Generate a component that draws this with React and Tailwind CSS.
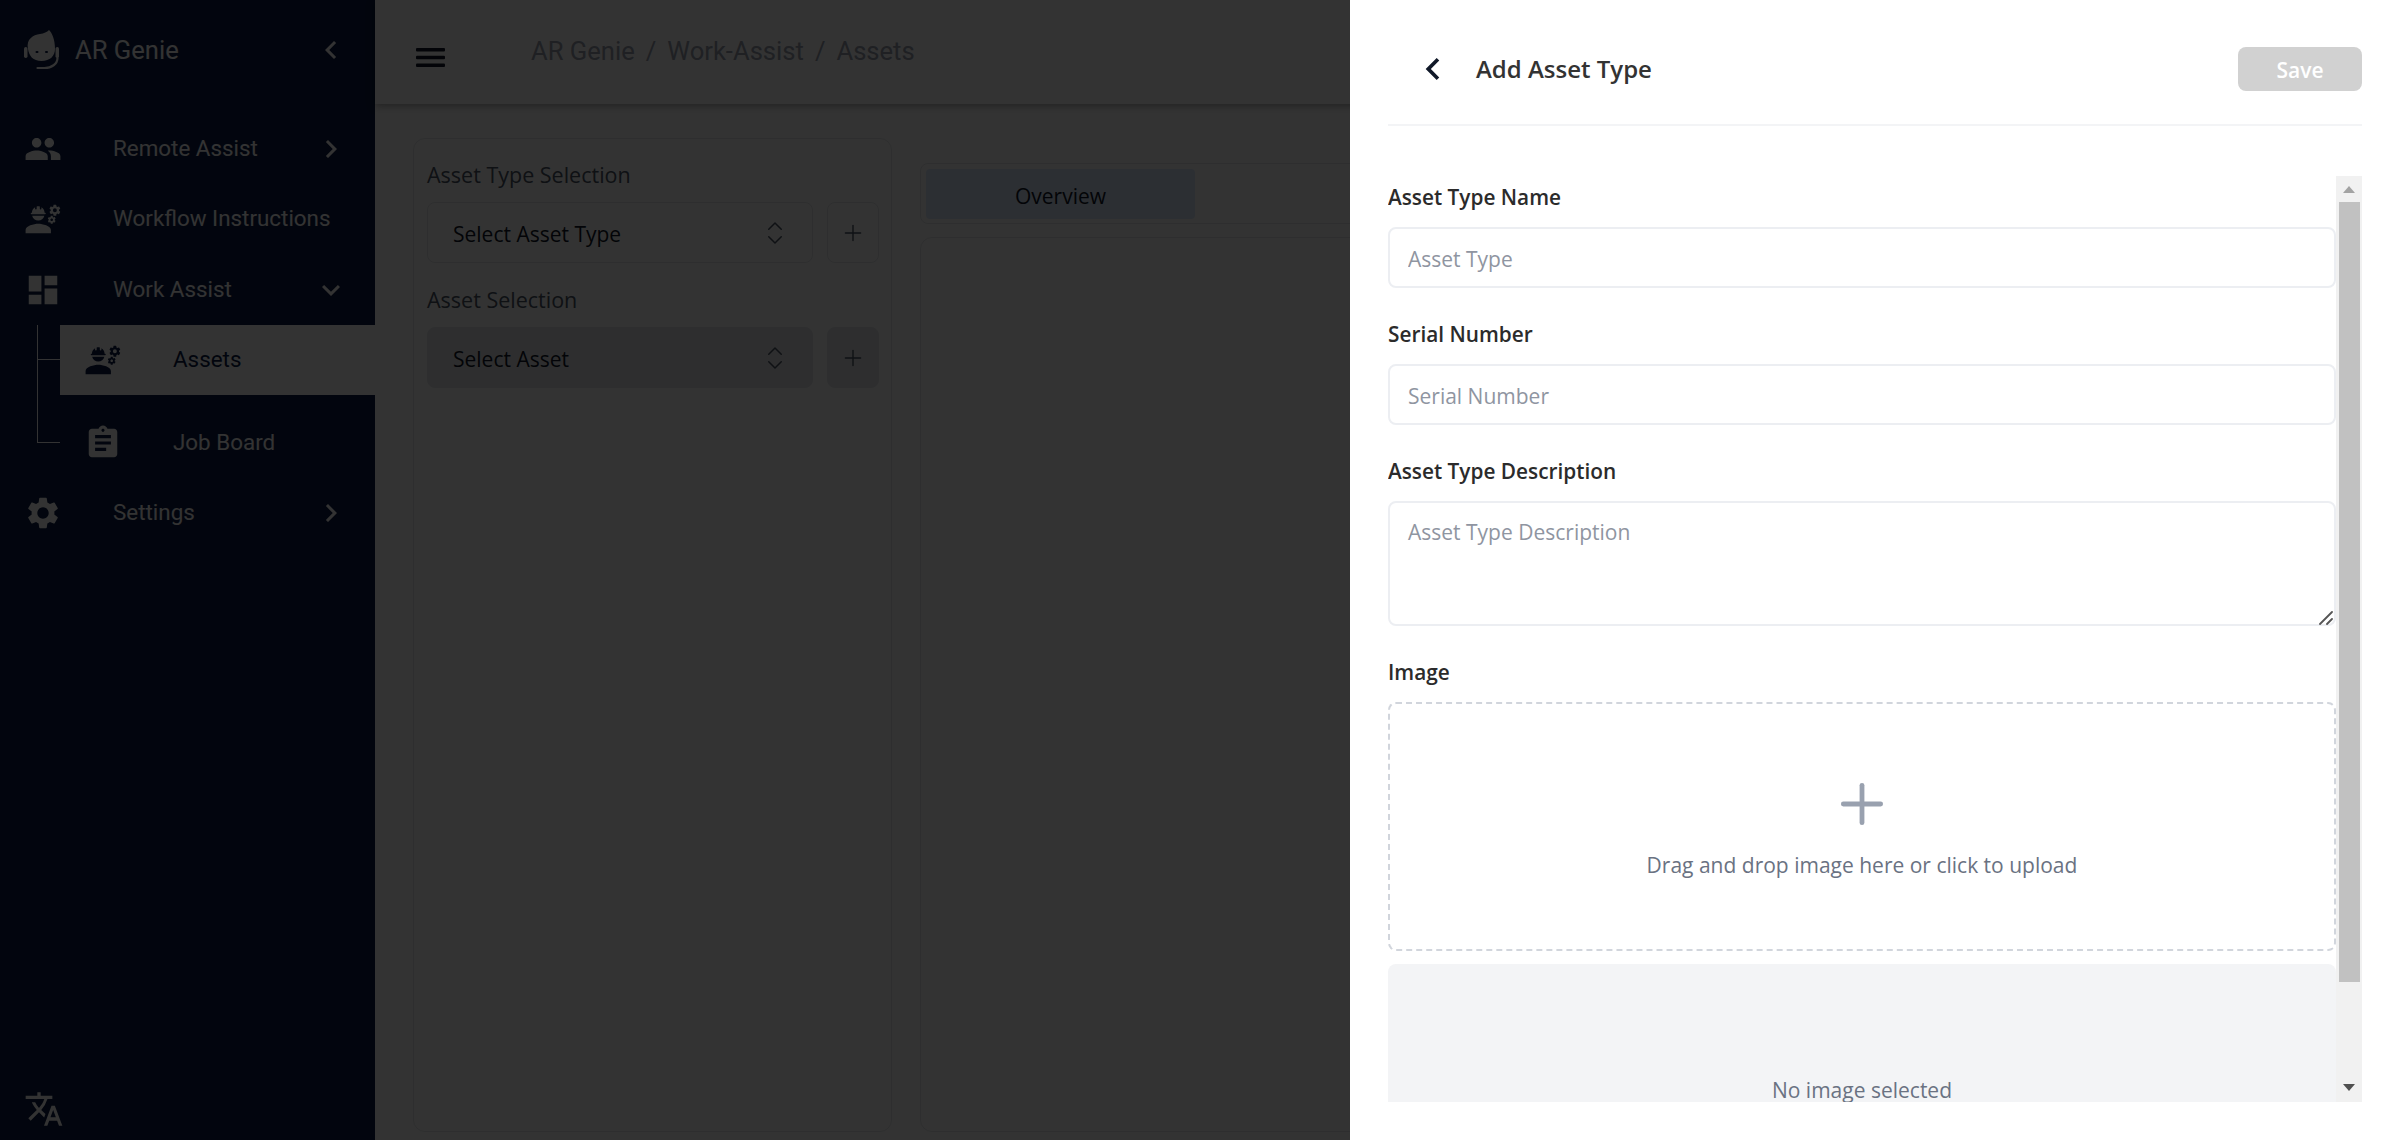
import React from 'react';
import { ChevronsUpDown, Plus } from "lucide-react";
import {
  MdChevronLeft,
  MdChevronRight,
  MdKeyboardArrowDown,
  MdPeople,
  MdEngineering,
  MdDashboard,
  MdAssignment,
  MdSettings,
  MdTranslate,
} from "react-icons/md";

const Logo = () => (
  <svg width="40" height="42" viewBox="0 0 40 42" className="shrink-0">
    <path fill="#fff" d="M5 20C3 10 10 6 17 5c4-.5 7-2 9-4 3 3 6 9 6 19 0 7-5 12-13.500 12S6 27 5 20z" />
    <rect x="1" y="18" width="3.500" height="11" rx="1.700" fill="#fff" />
    <rect x="32.500" y="18" width="3.500" height="11" rx="1.700" fill="#fff" />
    <rect x="12.500" y="22" width="3" height="2" rx="1" fill="#0b1d45" />
    <rect x="22" y="22" width="3" height="2" rx="1" fill="#0b1d45" />
    <path fill="none" stroke="#fff" strokeWidth="2.200" strokeLinecap="round" d="M34.500 29c0 6-6 10-13 10h-7" />
  </svg>
);

const NavRow = ({ icon: Icon, label, chevron: Chevron, className = "" }) => (
  <div className={`flex h-[70px] items-center pl-[24px] pr-[26px] text-white ${className}`}>
    <Icon size={38} className="shrink-0" />
    <span className="ml-[51px] flex-1 text-[22.400px] whitespace-nowrap">{label}</span>
    {Chevron && <Chevron size={36} className="shrink-0" />}
  </div>
);

const Sidebar = () => (
  <aside className="flex h-full w-[375px] shrink-0 flex-col bg-[#0b1d45] font-['Roboto',sans-serif]">
    <div className="flex h-[100px] items-center pl-[23px] pr-[26px] text-white">
      <Logo />
      <span className="ml-[12px] flex-1 text-[25.600px]">AR Genie</span>
      <MdChevronLeft size={36} />
    </div>
    <div className="mt-[14px] flex flex-col">
      <NavRow icon={MdPeople} label="Remote Assist" chevron={MdChevronRight} />
      <NavRow icon={MdEngineering} label="Workflow Instructions" />
      <NavRow icon={MdDashboard} label="Work Assist" chevron={MdKeyboardArrowDown} className="mt-px" />
    </div>
    <div className="relative">
      <div className="absolute left-[37px] top-0 h-[118px] w-[23px] border-b border-l border-white" />
      <div className="absolute left-[38px] top-[34px] h-px w-[22px] bg-white" />
      <div className="relative ml-[60px] flex h-[70px] items-center bg-white pl-[24px] text-[#0b1d45]">
        <MdEngineering size={38} className="shrink-0" />
        <span className="ml-[51px] text-[22.400px]">Assets</span>
      </div>
      <div className="relative ml-[60px] mt-[13px] flex h-[70px] items-center pl-[24px] text-white">
        <MdAssignment size={38} className="shrink-0" />
        <span className="ml-[51px] text-[22.400px]">Job Board</span>
      </div>
    </div>
    <NavRow icon={MdSettings} label="Settings" chevron={MdChevronRight} />
    <div className="mt-auto pb-[11px] pl-[24px] text-white">
      <MdTranslate size={40} />
    </div>
  </aside>
);

const SelectBox = ({ label, disabled }) => (
  <div className="flex gap-[14px]">
    <div className={`flex h-[61px] w-[386px] items-center justify-between rounded-lg border border-gray-200 pl-[25px] pr-[22px] text-gray-900 ${disabled ? "bg-gray-200" : "bg-white"}`}>
      <span className="pt-[4px] text-[21px] font-medium">{label}</span>
      <ChevronsUpDown size={30} strokeWidth={1.200} className="text-gray-600" />
    </div>
    <div className={`flex h-[61px] w-[52px] items-center justify-center rounded-lg border border-gray-200 text-gray-600 ${disabled ? "bg-gray-200" : "bg-white"}`}>
      <Plus size={26} strokeWidth={1.300} />
    </div>
  </div>
);

const MainArea = () => (
  <div className="flex h-full min-w-0 flex-1 flex-col bg-white">
    <header className="flex h-[104px] shrink-0 items-center bg-white pb-[2px] pl-[41px] shadow-[0_2px_8px_rgba(0,0,0,0.35)]">
      <svg width="29" height="19" viewBox="0 0 29 19" className="mt-[12px] shrink-0 text-gray-900" fill="currentColor">
        <rect width="29" height="3.600" rx="1" />
        <rect y="7.700" width="29" height="3.600" rx="1" />
        <rect y="15.400" width="29" height="3.600" rx="1" />
      </svg>
      <div className="ml-[86px] flex gap-[11px] font-['Roboto',sans-serif] text-[25.600px] text-gray-400">
        <span>AR Genie</span>
        <span>/</span>
        <span>Work-Assist</span>
        <span>/</span>
        <span>Assets</span>
      </div>
    </header>
    <div className="flex min-h-0 flex-1 gap-[28px] pb-[8px] pl-[38px] pt-[34px] font-['Open_Sans',sans-serif]">
      <div className="w-[479px] shrink-0 rounded-xl border border-gray-200 pl-[13px] pt-[21px]">
        <div className="mb-[12px] text-[21.500px] leading-[30px] text-gray-600">Asset Type Selection</div>
        <SelectBox label="Select Asset Type" />
        <div className="mb-[12px] mt-[22px] text-[21.500px] leading-[30px] text-gray-600">Asset Selection</div>
        <SelectBox label="Select Asset" disabled />
      </div>
      <div className="mt-[25px] flex w-[1450px] shrink-0 flex-col gap-[13px]">
        <div className="h-[61px] rounded-lg border border-gray-200 p-[5px]">
          <div className="flex h-[50px] w-[269px] items-center justify-center rounded bg-blue-100 pt-[5px] text-[21px] font-medium text-gray-900">Overview</div>
        </div>
        <div className="flex-1 rounded-xl border border-gray-200" />
      </div>
    </div>
  </div>
);

const FieldLabel = ({ children, className = "" }) => (
  <label className={`block h-[30px] text-[20.800px] font-semibold leading-[30px] text-[#2b2b2b] ${className}`}>{children}</label>
);

const inputClass = "mb-[31px] block h-[61px] w-full rounded-lg border-2 border-[#eceef2] px-[18px] pt-[2px] text-[21px] placeholder:text-[#8f95a1]";

const ScrollBar = () => (
  <div className="flex w-[26px] shrink-0 flex-col items-center bg-[#f1f1f1]">
    <div className="flex h-[26px] items-center justify-center">
      <div className="h-0 w-0 border-x-[6px] border-b-[7px] border-x-transparent border-b-[#a3a3a3]" />
    </div>
    <div className="h-[780px] w-[21px] bg-[#c1c1c1]" />
    <div className="mt-auto flex h-[26px] items-start justify-center pt-[8px]">
      <div className="h-0 w-0 border-x-[6px] border-t-[7px] border-x-transparent border-t-[#505050]" />
    </div>
  </div>
);

const Drawer = () => (
  <div className="fixed inset-y-0 right-0 flex w-[1050px] flex-col bg-white px-[38px] font-['Open_Sans',sans-serif]">
    <div className="flex h-[126px] shrink-0 items-start justify-between border-b-2 border-gray-100 pt-[47px]">
      <div className="flex h-[44px] items-center">
        <MdChevronLeft size={44} className="ml-[23px] text-gray-900" />
        <h2 className="ml-[21px] text-[24px] font-semibold text-[#333333]">Add Asset Type</h2>
      </div>
      <button className="h-[44px] w-[124px] rounded-lg bg-[#d1d1d1] pt-[4px] text-[21px] font-semibold text-white">Save</button>
    </div>
    <div className="mt-[50px] flex h-[926px] shrink-0">
      <div className="min-w-0 flex-1 overflow-hidden pt-[6px]">
        <FieldLabel className="mb-[15px]">Asset Type Name</FieldLabel>
        <input placeholder="Asset Type" className={inputClass} />
        <FieldLabel className="mb-[15px]">Serial Number</FieldLabel>
        <input placeholder="Serial Number" className={inputClass} />
        <FieldLabel className="mb-[15px]">Asset Type Description</FieldLabel>
        <div className="relative mb-[31px]">
          <textarea
            placeholder="Asset Type Description"
            className="block h-[125px] w-full resize-none rounded-lg border-2 border-[#eceef2] px-[18px] py-[14px] text-[21px] placeholder:text-[#8f95a1]"
          />
          <svg width="14" height="14" viewBox="0 0 14 14" className="absolute bottom-px right-[3px]" stroke="#555" strokeWidth="1.800" strokeLinecap="round">
            <path d="M1 13 13 1" />
            <path d="M8 13 13 8" />
          </svg>
        </div>
        <FieldLabel className="mb-[15px]">Image</FieldLabel>
        <div className="flex h-[249px] flex-col items-center rounded-lg border-2 border-dashed border-gray-300 pt-[68px]">
          <Plus size={64} strokeWidth={1.800} className="text-gray-400" />
          <p className="mt-[14px] text-[21px] text-gray-500">Drag and drop image here or click to upload</p>
        </div>
        <div className="mt-[13px] flex h-[260px] flex-col items-center rounded-lg bg-gray-100 pt-[111px]">
          <p className="text-[21px] text-gray-500">No image selected</p>
        </div>
      </div>
      <ScrollBar />
    </div>
  </div>
);

const App = () => {
  return (
    <div className="relative flex h-screen w-full overflow-hidden">
      <Sidebar />
      <MainArea />
      <div className="fixed inset-0 bg-black/80" />
      <Drawer />
    </div>
  );
};

export default App;
